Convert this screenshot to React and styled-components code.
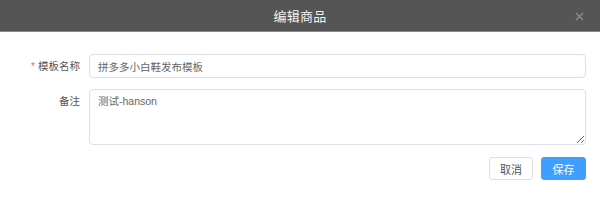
import React from "react";
import styled, { createGlobalStyle } from "styled-components";

const Global = createGlobalStyle`
  html, body { margin: 0; padding: 0; background: #fff; }
  body { font-family: "Helvetica Neue", "Liberation Sans", "Noto Sans CJK SC", sans-serif; }
  * { box-sizing: border-box; }
`;

const Dialog = styled.div`
  width: 600px;
  height: 201px;
  background: #fff;
  display: flex;
  flex-direction: column;
`;

const Header = styled.div`
  height: 32px;
  background: #555555;
  border-bottom: 1px solid #8a8a8a;
  display: flex;
  align-items: center;
  justify-content: center;
  position: relative;
  color: #f2f2f2;
  font-size: 13px;
  letter-spacing: 0.3px;
`;

const Close = styled.span`
  position: absolute;
  right: 15px;
  top: 12px;
  width: 10px;
  height: 10px;
  display: flex;
`;

const Body = styled.div`
  padding: 22px 14px 0 0;
  display: flex;
  flex-direction: column;
  gap: 11px;
`;

const Row = styled.div`
  display: flex;
  align-items: flex-start;
`;

const Label = styled.label`
  width: 89px;
  flex: none;
  padding-right: 9px;
  text-align: right;
  font-size: 10.5px;
  color: #555;
  line-height: 24px;
`;

const Star = styled.span`
  color: #f56c6c;
  margin-right: 3px;
`;

const Input = styled.input`
  flex: 1;
  height: 24px;
  border: 1px solid #dcdfe6;
  border-radius: 4px;
  padding: 0 8px;
  font-size: 10.5px;
  color: #666;
  font-family: inherit;
  outline: none;
`;

const TextArea = styled.textarea`
  flex: 1;
  height: 56px;
  border: 1px solid #dcdfe6;
  border-radius: 4px;
  padding: 4px 8px;
  font-size: 10.5px;
  line-height: 1.5;
  color: #666;
  font-family: inherit;
  outline: none;
`;

const Footer = styled.div`
  display: flex;
  justify-content: flex-end;
  gap: 8px;
  padding: 12px 14px 0 0;
`;

const Button = styled.button`
  height: 23px;
  width: ${(p) => (p.$primary ? "45px" : "44px")};
  border-radius: 3px;
  font-size: 11px;
  font-family: inherit;
  padding: 0;
  border: 1px solid ${(p) => (p.$primary ? "#409eff" : "#dcdfe6")};
  background: ${(p) => (p.$primary ? "#409eff" : "#fff")};
  color: ${(p) => (p.$primary ? "#fff" : "#555")};
`;

export default function App() {
  return (
    <>
      <Global />
      <Dialog>
        <Header>
          编辑商品
          <Close>
            <svg width="9" height="9" viewBox="0 0 9 9">
              <path d="M1 1L8 8M8 1L1 8" stroke="#8f8f8f" strokeWidth="1.2" />
            </svg>
          </Close>
        </Header>
        <Body>
          <Row>
            <Label>
              <Star>*</Star>模板名称
            </Label>
            <Input defaultValue="拼多多小白鞋发布模板" />
          </Row>
          <Row>
            <Label>备注</Label>
            <TextArea defaultValue="测试-hanson" />
          </Row>
        </Body>
        <Footer>
          <Button>取消</Button>
          <Button $primary>保存</Button>
        </Footer>
      </Dialog>
    </>
  );
}
